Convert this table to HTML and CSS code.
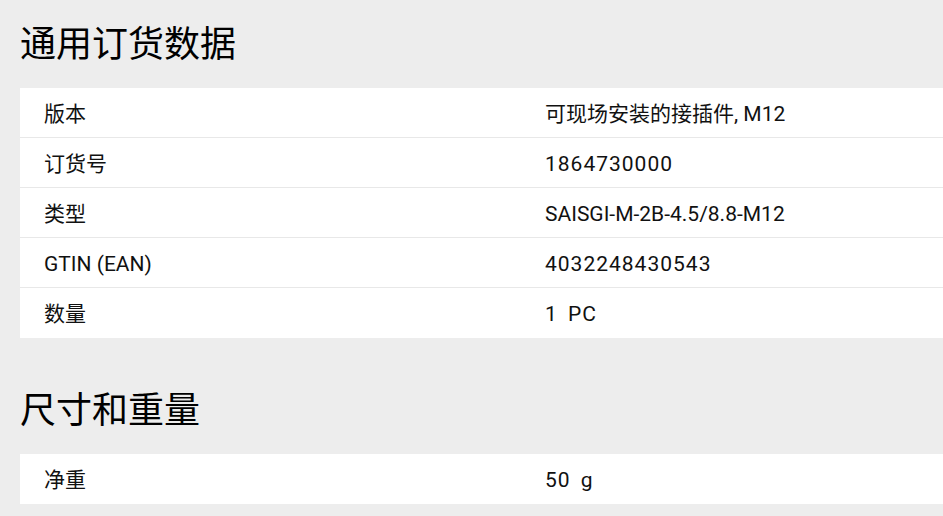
FILE: index.html
```html
<!DOCTYPE html>
<html lang="zh-CN">
<head>
<meta charset="utf-8">
<title>产品数据</title>
<link rel="stylesheet" href="styles.css">
</head>
<body>
<main class="page">
  <section class="section">
    <h2 class="section-title">通用订货数据</h2>
    <div class="data-table">
      <div class="data-row"><div class="data-label">版本</div><div class="data-value">可现场安装的接插件, M12</div></div>
      <div class="data-row"><div class="data-label">订货号</div><div class="data-value num">1864730000</div></div>
      <div class="data-row"><div class="data-label">类型</div><div class="data-value">SAISGI-M-2B-4.5/8.8-M12</div></div>
      <div class="data-row"><div class="data-label">GTIN (EAN)</div><div class="data-value num">4032248430543</div></div>
      <div class="data-row"><div class="data-label">数量</div><div class="data-value num">1 PC</div></div>
    </div>
  </section>
  <section class="section">
    <h2 class="section-title">尺寸和重量</h2>
    <div class="data-table">
      <div class="data-row"><div class="data-label">净重</div><div class="data-value num">50 g</div></div>
    </div>
  </section>
</main>
</body>
</html>
```
FILE: styles.css
```css
html, body {
  margin: 0;
  padding: 0;
  background: #ededed;
}

body {
  font-family: Roboto, "Noto Sans CJK SC", sans-serif;
  color: #111;
  overflow: hidden;
}

.page {
  padding: 19px 0 0 20px;
  display: flex;
  flex-direction: column;
  gap: 47px;
}

.section-title {
  margin: 0 0 25px;
  font-family: "Noto Sans CJK SC", sans-serif;
  font-size: 36px;
  font-weight: 400;
  line-height: 44px;
  color: #000;
}

.data-table {
  background: #fff;
  display: flex;
  flex-direction: column;
}

.data-row {
  box-sizing: border-box;
  height: 50px;
  padding: 3px 0 0 24px;
  border-bottom: 1px solid #e8e8e8;
  display: grid;
  grid-template-columns: 501px 1fr;
  align-items: start;
  font-size: 21px;
  line-height: 46px;
}

.data-row:last-child {
  border-bottom-color: #fff;
}

.data-value.num {
  letter-spacing: 1px;
  word-spacing: 4px;
  white-space: pre;
}
```
